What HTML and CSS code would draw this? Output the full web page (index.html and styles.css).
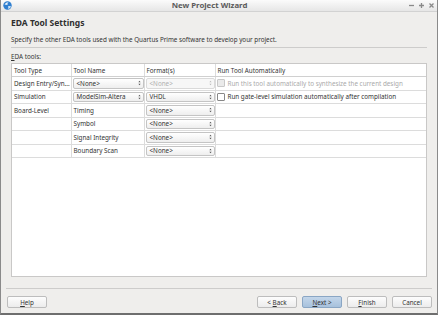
FILE: index.html
```html
<!DOCTYPE html>
<html lang="en">
<head>
  <meta charset="UTF-8">
  <title>New Project Wizard</title>
  <link rel="stylesheet" href="styles.css">
</head>
<body>

  <div class="window">
    <div class="titlebar">
      <svg class="app-icon" width="9" height="9" viewBox="0 0 9 9">
        <circle cx="4.5" cy="4.5" r="4.2" fill="#2f7fd0"/>
        <path d="M1.5 3.5 Q3 1 5.5 1.2 Q4 2.5 4.5 4 Q2.5 3.6 1.5 3.5Z" fill="#e8f2fb"/>
        <path d="M5 5.2 Q7 4.6 8.2 5.6 Q7 7.8 4.8 8 Q5.8 6.6 5 5.2Z" fill="#cfe4f7"/>
      </svg>
      <span class="title">New Project Wizard</span>
      <div class="win-controls">
        <svg width="7" height="7" viewBox="0 0 7 7"><path d="M1 3.5 H6" /></svg>
        <svg width="7" height="7" viewBox="0 0 7 7"><path d="M1 3.5 H6 M3.5 1 V6" /></svg>
        <svg width="7" height="7" viewBox="0 0 7 7"><path d="M1.5 1.5 L5.5 5.5 M5.5 1.5 L1.5 5.5" /></svg>
      </div>
    </div>

    <div class="content">
      <h1>EDA Tool Settings</h1>
      <p class="desc">Specify the other EDA tools used with the Quartus Prime software to develop your project.</p>
      <div class="rule"></div>
      <p class="label"><u>E</u>DA tools:</p>

      <div class="table-box">
        <table>
          <colgroup>
            <col class="c1"><col class="c2"><col class="c3"><col>
          </colgroup>
          <tr class="head">
            <th>Tool Type</th><th>Tool Name</th><th>Format(s)</th><th>Run Tool Automatically</th>
          </tr>
          <tr>
            <td>Design Entry/Syn...</td>
            <td><div class="combo"><span>&lt;None&gt;</span><svg class="arrows" viewBox="0 0 4 7"><path d="M2 0.5 L3.5 2.5 H0.5Z M2 6.5 L3.5 4.5 H0.5Z"/></svg></div></td>
            <td><div class="combo disabled"><span>&lt;None&gt;</span><svg class="arrows" viewBox="0 0 4 7"><path d="M2 0.5 L3.5 2.5 H0.5Z M2 6.5 L3.5 4.5 H0.5Z"/></svg></div></td>
            <td><label class="check disabled"><span class="box"></span>Run this tool automatically to synthesize the current design</label></td>
          </tr>
          <tr>
            <td>Simulation</td>
            <td><div class="combo"><span>ModelSim-Altera</span><svg class="arrows" viewBox="0 0 4 7"><path d="M2 0.5 L3.5 2.5 H0.5Z M2 6.5 L3.5 4.5 H0.5Z"/></svg></div></td>
            <td><div class="combo"><span>VHDL</span><svg class="arrows" viewBox="0 0 4 7"><path d="M2 0.5 L3.5 2.5 H0.5Z M2 6.5 L3.5 4.5 H0.5Z"/></svg></div></td>
            <td><label class="check"><span class="box"></span>Run gate-level simulation automatically after compilation</label></td>
          </tr>
          <tr>
            <td>Board-Level</td>
            <td class="name">Timing</td>
            <td><div class="combo"><span>&lt;None&gt;</span><svg class="arrows" viewBox="0 0 4 7"><path d="M2 0.5 L3.5 2.5 H0.5Z M2 6.5 L3.5 4.5 H0.5Z"/></svg></div></td>
            <td></td>
          </tr>
          <tr>
            <td></td>
            <td class="name">Symbol</td>
            <td><div class="combo"><span>&lt;None&gt;</span><svg class="arrows" viewBox="0 0 4 7"><path d="M2 0.5 L3.5 2.5 H0.5Z M2 6.5 L3.5 4.5 H0.5Z"/></svg></div></td>
            <td></td>
          </tr>
          <tr>
            <td></td>
            <td class="name">Signal Integrity</td>
            <td><div class="combo"><span>&lt;None&gt;</span><svg class="arrows" viewBox="0 0 4 7"><path d="M2 0.5 L3.5 2.5 H0.5Z M2 6.5 L3.5 4.5 H0.5Z"/></svg></div></td>
            <td></td>
          </tr>
          <tr>
            <td></td>
            <td class="name">Boundary Scan</td>
            <td><div class="combo"><span>&lt;None&gt;</span><svg class="arrows" viewBox="0 0 4 7"><path d="M2 0.5 L3.5 2.5 H0.5Z M2 6.5 L3.5 4.5 H0.5Z"/></svg></div></td>
            <td></td>
          </tr>
        </table>
      </div>
    </div>

    <div class="footer">
      <div class="rule"></div>
      <div class="buttons">
        <button><u>H</u>elp</button>
        <span class="spacer"></span>
        <button>&lt; <u>B</u>ack</button>
        <button class="default"><u>N</u>ext &gt;</button>
        <button><u>F</u>inish</button>
        <button>Cancel</button>
      </div>
    </div>
  </div>

</body>
</html>
```

FILE: styles.css
```css
html, body {
  margin: 0;
  padding: 0;
}
body {
  font-family: "Noto Sans", "Open Sans", sans-serif;
  font-size: 6.3px;
  color: #333;
  background: #efeeec;
}
.window {
  width: 438px;
  height: 315px;
  box-sizing: border-box;
  border: 1px solid #8a8a8a;
  border-top: none;
  border-bottom: 2px solid #6e6e6e;
  background: #efeeec;
  display: flex;
  flex-direction: column;
}
.titlebar {
  height: 11px;
  border-bottom: 1px solid #d2d2d2;
  background: linear-gradient(#fbfbfb, #e6e6e6);
  display: flex;
  align-items: center;
  position: relative;
}
.app-icon {
  margin-left: 2px;
}
.title {
  position: absolute;
  left: 0;
  right: 19px;
  text-align: center;
  font-size: 7.8px;
  font-weight: bold;
  color: #5a5a5a;
  line-height: 11px;
}
.win-controls {
  margin-left: auto;
  margin-right: 2px;
  display: flex;
  gap: 3px;
}
.win-controls svg {
  stroke: #8a8a8a;
  stroke-width: 1.3;
  fill: none;
}
.content {
  padding: 0 10px;
}
h1 {
  margin: 5px 0 0;
  font-size: 8.5px;
  line-height: 12px;
  color: #2f2f2f;
}
.desc {
  margin: 6px 0 0;
  line-height: 10px;
}
.rule {
  height: 1px;
  background: #cdcccb;
  margin-top: 2px;
}
.label {
  margin: 4px 0 0;
  line-height: 10px;
}
.table-box {
  margin-top: 1px;
  height: 214px;
  box-sizing: border-box;
  border: 1px solid #c9c8c7;
  background: #fff;
}
table {
  width: 100%;
  border-collapse: collapse;
  table-layout: fixed;
}
col.c1 { width: 59px; }
col.c2 { width: 73px; }
col.c3 { width: 71px; }
th, td {
  height: 12.5px;
  padding: 0;
  border-right: 1px solid #dcdcdc;
  border-bottom: 1px solid #dcdcdc;
  text-align: left;
  white-space: nowrap;
  overflow: hidden;
  font-weight: normal;
  color: #333;
}
th:last-child, td:last-child {
  border-right: none;
}
.head th {
  height: 12px;
  padding-left: 2px;
  border-bottom: 1px solid #d0d0d0;
}
td:first-child, td.name {
  padding-left: 2px;
}
.combo {
  margin-left: 1px;
  height: 10.5px;
  box-sizing: border-box;
  border: 1px solid #c4c4c4;
  border-radius: 2px;
  background: linear-gradient(#ffffff, #eeeeee);
  display: flex;
  align-items: center;
  padding: 0 2px 0 3px;
  color: #333;
}
.combo span {
  flex: 1;
}
.combo .arrows {
  width: 3px;
  height: 6px;
  fill: #555;
}
.combo.disabled {
  color: #b0b0b0;
  background: #f7f7f7;
  border-color: #dadada;
}
.combo.disabled .arrows {
  fill: #bbb;
}
.check {
  display: flex;
  align-items: center;
  gap: 3px;
  padding-left: 1px;
}
.check .box {
  width: 6px;
  height: 6px;
  border: 1px solid #888;
  border-radius: 1px;
  background: #fff;
}
.check.disabled {
  color: #aaa;
}
.check.disabled .box {
  border-color: #c8c8c8;
  background: #eaeaea;
}
.footer {
  margin-top: 9px;
  padding: 0 5px;
}
.buttons {
  margin-top: 7px;
  display: flex;
  gap: 5px;
  padding-left: 1px;
}
.spacer {
  flex: 1;
}
button {
  width: 40px;
  height: 12px;
  padding: 0;
  font-family: inherit;
  font-size: 6.3px;
  color: #333;
  border: 1px solid #bdbdbd;
  border-radius: 2px;
  background: linear-gradient(#fdfdfd, #ececec);
}
button.default {
  border-color: #8aa6c4;
  background: linear-gradient(#c3d6ea, #a7c1dc);
}
```
